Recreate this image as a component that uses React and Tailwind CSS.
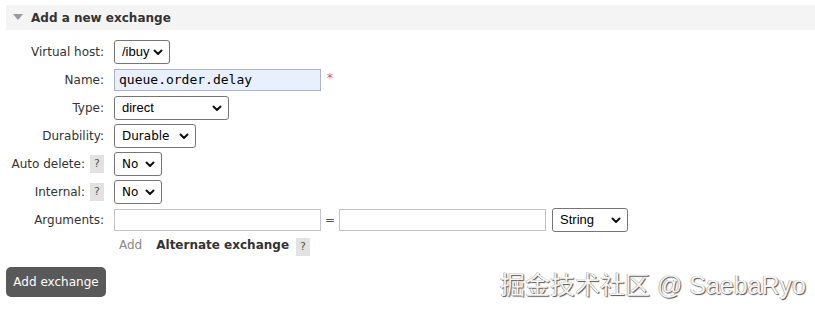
import React from 'react';

const labelFont = { fontFamily: '"DejaVu Sans", Verdana, sans-serif' };

function Chevron() {
  return (
    <svg width="10" height="7" viewBox="0 0 10 7" className="shrink-0">
      <path d="M1.5 1.5 L5 5 L8.5 1.5" fill="none" stroke="#111" strokeWidth="2" strokeLinecap="round" strokeLinejoin="round" />
    </svg>
  );
}

function Select({ value, width, font, size = 'text-[13px]' }) {
  return (
    <div
      className={`flex h-[24px] items-center justify-between rounded-[3px] border border-[#767676] bg-white pl-[7px] pr-[6px] text-black ${size}`}
      style={{ width, fontFamily: font }}
    >
      <span>{value}</span>
      <Chevron />
    </div>
  );
}

function Help() {
  return (
    <span className="inline-flex h-[18px] w-[14px] items-center justify-center bg-[#e2e2e2] text-[11px] text-[#555]">?</span>
  );
}

function Row({ label, help, children }) {
  return (
    <div className="flex h-[28px] items-center">
      <div className="flex w-[104px] items-center justify-end gap-[5px] text-[12px] text-[#333]" style={labelFont}>
        <span>{label}</span>
        {help && <Help />}
      </div>
      <div className="ml-[10px] flex items-center">{children}</div>
    </div>
  );
}

export default function App() {
  const arial = '"Liberation Sans", Arial, sans-serif';
  const verd = '"DejaVu Sans", Verdana, sans-serif';
  return (
    <div className="relative h-[314px] w-[815px] overflow-hidden bg-white">
      <div className="ml-[6px] mt-[5px] flex h-[25px] items-center bg-[#f4f4f4] pl-[7px]">
        <svg width="10" height="7" viewBox="0 0 10 7">
          <path d="M0 0 L10 0 L5 6 Z" fill="#999" />
        </svg>
        <span className="ml-[8px] text-[12px] font-bold text-[#333]" style={labelFont}>Add a new exchange</span>
      </div>

      <div className="mt-[8px] flex flex-col">
        <Row label="Virtual host:">
          <Select value="/ibuy" width={56} font={arial} />
        </Row>
        <Row label="Name:">
          <div
            className="flex h-[22px] w-[207px] items-center border border-[#aab4c8] bg-[#e8f0fe] px-[4px] text-[13px] text-black"
            style={{ fontFamily: '"DejaVu Sans Mono", "Liberation Mono", monospace' }}
          >
            queue.order.delay
          </div>
          <span className="ml-[6px] self-start text-[12px] text-[#e05555]" style={labelFont}>*</span>
        </Row>
        <Row label="Type:">
          <Select value="direct" width={115} font={arial} />
        </Row>
        <Row label="Durability:">
          <Select value="Durable" width={82} font={verd} size="text-[12px]" />
        </Row>
        <Row label="Auto delete:" help>
          <Select value="No" width={48} font={verd} size="text-[12px]" />
        </Row>
        <Row label="Internal:" help>
          <Select value="No" width={48} font={verd} size="text-[12px]" />
        </Row>
        <Row label="Arguments:">
          <div className="h-[22px] w-[207px] border border-[#c4c4c4] bg-white" />
          <span className="mx-[4px] text-[12px] text-[#555]" style={labelFont}>=</span>
          <div className="h-[22px] w-[207px] border border-[#c4c4c4] bg-white" />
          <div className="ml-[6px]">
            <Select value="String" width={76} font={arial} />
          </div>
        </Row>
        <div className="flex h-[22px] items-center pl-[119px]" style={labelFont}>
          <span className="text-[12px] text-[#888]">Add</span>
          <span className="ml-[14px] text-[12px] font-bold text-[#333]">Alternate exchange</span>
          <span className="ml-[7px]"><Help /></span>
        </div>
      </div>

      <button
        className="ml-[6px] mt-[11px] flex h-[30px] w-[100px] items-center justify-center rounded-[5px] bg-[#595959] text-[12px] text-white"
        style={labelFont}
      >
        Add exchange
      </button>

      <div
        className="absolute left-[500px] top-[267px] text-[25px] text-[#f4f4f4]"
        style={{
          fontFamily: '"Liberation Sans", "Noto Sans CJK SC", sans-serif',
          textShadow: '1px 1px 1px #555, -0.5px -0.5px 0 #999',
        }}
      >
        掘金技术社区 @ SaebaRyo
      </div>
    </div>
  );
}
